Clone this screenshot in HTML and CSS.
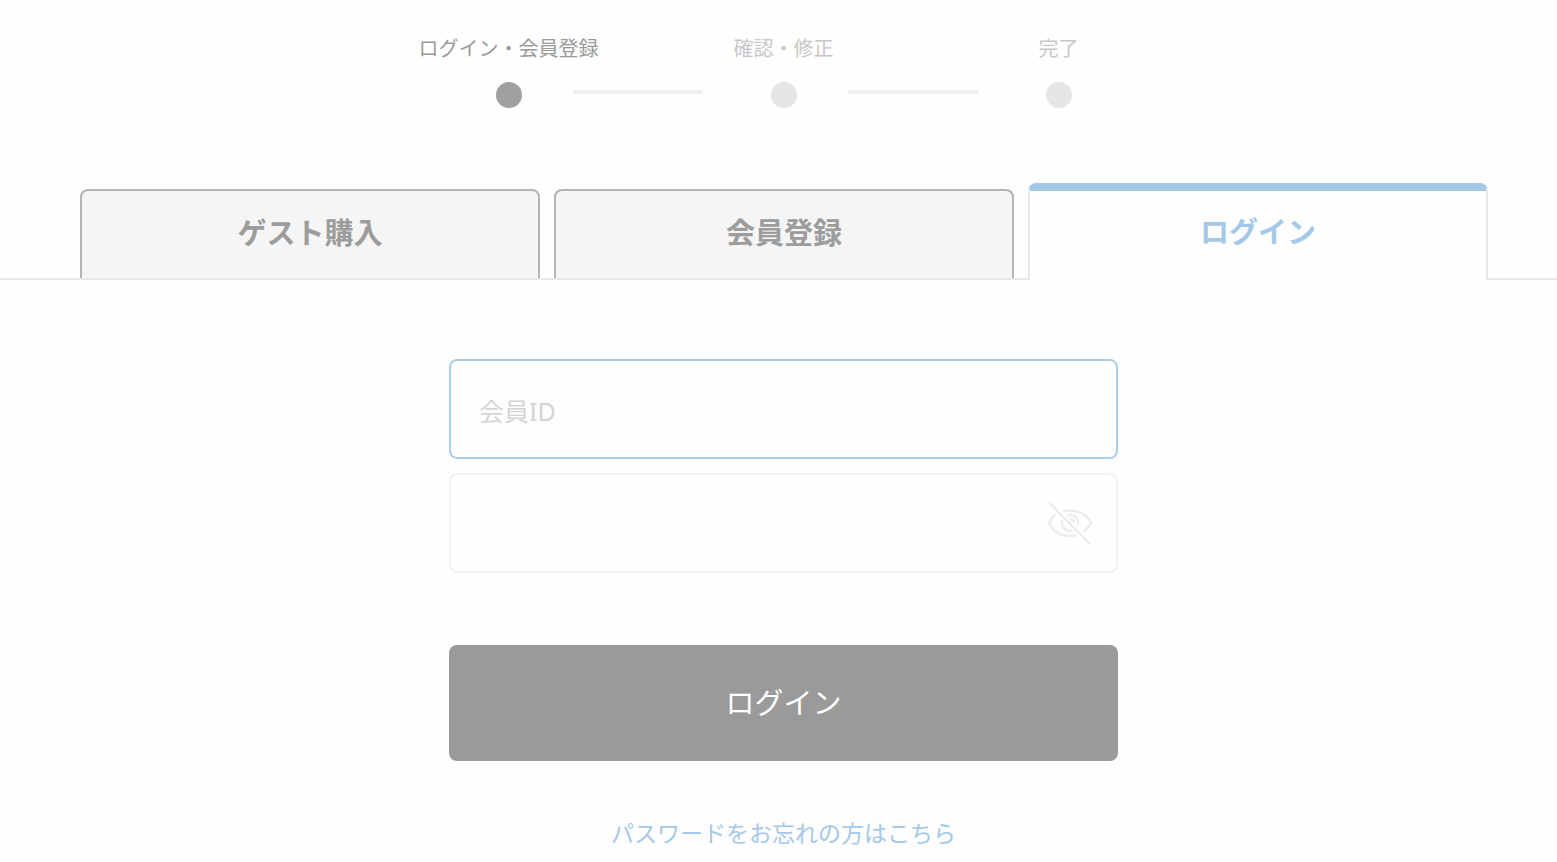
FILE: index.html
```html
<!DOCTYPE html>
<html lang="ja">
<head>
    <meta charset="UTF-8">
    <meta name="viewport" content="width=device-width, initial-scale=1.0">
    <title>ログイン</title>
    <link rel="stylesheet" href="styles.css">
</head>
<body>
    <ol class="steps">
        <li class="step -on"><span class="step_name">ログイン・会員登録</span><span class="dot"></span></li>
        <li class="step"><span class="step_name">確認・修正</span><span class="dot"></span></li>
        <li class="step"><span class="step_name">完了</span><span class="dot"></span></li>
    </ol>

    <div class="tabs" role="tablist">
        <button type="button" class="tab" role="tab" aria-selected="false">ゲスト購入</button>
        <button type="button" class="tab" role="tab" aria-selected="false">会員登録</button>
        <button type="button" class="tab -on" role="tab" aria-selected="true">ログイン</button>
    </div>

    <form class="login_form">
        <div class="field -on">
            <input type="text" class="field_input" name="member_id" placeholder="会員ID" aria-label="会員ID">
        </div>
        <div class="field">
            <input type="password" class="field_input" name="password" aria-label="パスワード">
            <button type="button" class="eye_btn" aria-label="パスワードを表示">
                <svg class="eye" viewBox="0 0 48 48" aria-hidden="true">
                    <path d="M3.5 4 L44.5 45.5"/>
                    <path d="M16.5 12.5 C29 9.5 40 13.5 45 24 C43.2 27.6 41 30.2 37.5 32.4"/>
                    <path d="M9.5 15.5 C6.5 17.8 4.5 20.6 3 24 C8 34.5 19 39 31 36.4"/>
                    <path d="M21.5 16.4 A8 8 0 0 1 31.5 26.5"/>
                    <path d="M16.3 21.5 A8 8 0 0 0 26.5 31.6"/>
                    <path d="M24 20 A4 4 0 0 1 28 24"/>
                </svg>
            </button>
        </div>
        <button type="submit" class="login_btn">ログイン</button>
        <a href="#" class="forgot">パスワードをお忘れの方はこちら</a>
    </form>
</body>
</html>
```
FILE: styles.css
```css
*{
  box-sizing: border-box;
}
body{
  margin: 0;
  background-color: #fefefe;
  color: #9a9a9a;
  font-family: "Noto Sans", "Noto Sans CJK JP", sans-serif;
}
button,
input{
  font-family: inherit;
}

/* steps */
.steps{
  display: flex;
  justify-content: center;
  gap: 130px;
  margin: 0;
  padding: 33px 0 0 10px;
  list-style: none;
}
.step{
  position: relative;
  display: flex;
  flex-direction: column;
  align-items: center;
  gap: 17px;
  width: 145px;
  color: #c8c8c8;
}
.step_name{
  font-size: 20px;
  line-height: 32px;
  white-space: nowrap;
}
.dot{
  width: 26px;
  height: 26px;
  border-radius: 50%;
  background-color: #e6e6e6;
}
.step.-on{
  color: #9a9a9a;
}
.step.-on .dot{
  background-color: #a0a0a0;
}
/* line to the next step */
.step:not(:last-child)::after{
  content: "";
  position: absolute;
  left: calc(100% - 8px);
  bottom: 14px;
  width: 130px;
  height: 4px;
  background-color: #efefef;
}

/* tabs */
.tabs{
  display: flex;
  align-items: flex-end;
  gap: 14px;
  margin-top: 75px;
  padding: 0 69px 0 80px;
  border-bottom: 2px solid #e8e8e8;
}
.tab{
  flex: 1;
  height: 89px;
  padding: 0 0 8px;
  border: 2px solid #b4b4b4;
  border-bottom: 0;
  border-radius: 8px 8px 0 0;
  background-color: #f5f5f5;
  color: #9c9c9c;
  font-size: 29px;
  font-weight: bold;
}
.tab.-on{
  height: 97px;
  margin-bottom: -2px;
  padding-bottom: 12px;
  border-color: #e8e8e8;
  border-top: 8px solid #a4c8e8;
  background-color: #fefefe;
  color: #a4c8e8;
}

/* form */
.login_form{
  display: flex;
  flex-direction: column;
  gap: 14px;
  max-width: 679px;
  margin: 0 auto;
  padding: 79px 0 0 10px;
}
.field{
  display: flex;
  align-items: center;
  height: 100px;
  border: 2px solid #f1f1f1;
  border-radius: 8px;
}
.field.-on{
  border-color: #aacdea;
}
.field_input{
  flex: 1;
  min-width: 0;
  height: 100%;
  padding: 4px 28px 0;
  border: 0;
  outline: 0;
  background-color: transparent;
  color: #9a9a9a;
  font-size: 25px;
}
.field_input::placeholder{
  color: #d4d4d4;
  opacity: 1;
}
.eye_btn{
  display: flex;
  margin-right: 22px;
  padding: 0;
  border: 0;
  background-color: transparent;
}
.eye{
  width: 48px;
  height: 48px;
  fill: none;
  stroke: #ececec;
  stroke-width: 2.4;
}
.login_btn{
  height: 116px;
  margin-top: 58px;
  padding: 0 0 4px;
  border: 0;
  border-radius: 8px;
  background-color: #9a9a9a;
  color: #fff;
  font-size: 29px;
}
.forgot{
  align-self: center;
  margin-top: 40px;
  color: #a4c8e8;
  font-size: 23px;
  line-height: 36px;
  text-decoration: none;
}
```
